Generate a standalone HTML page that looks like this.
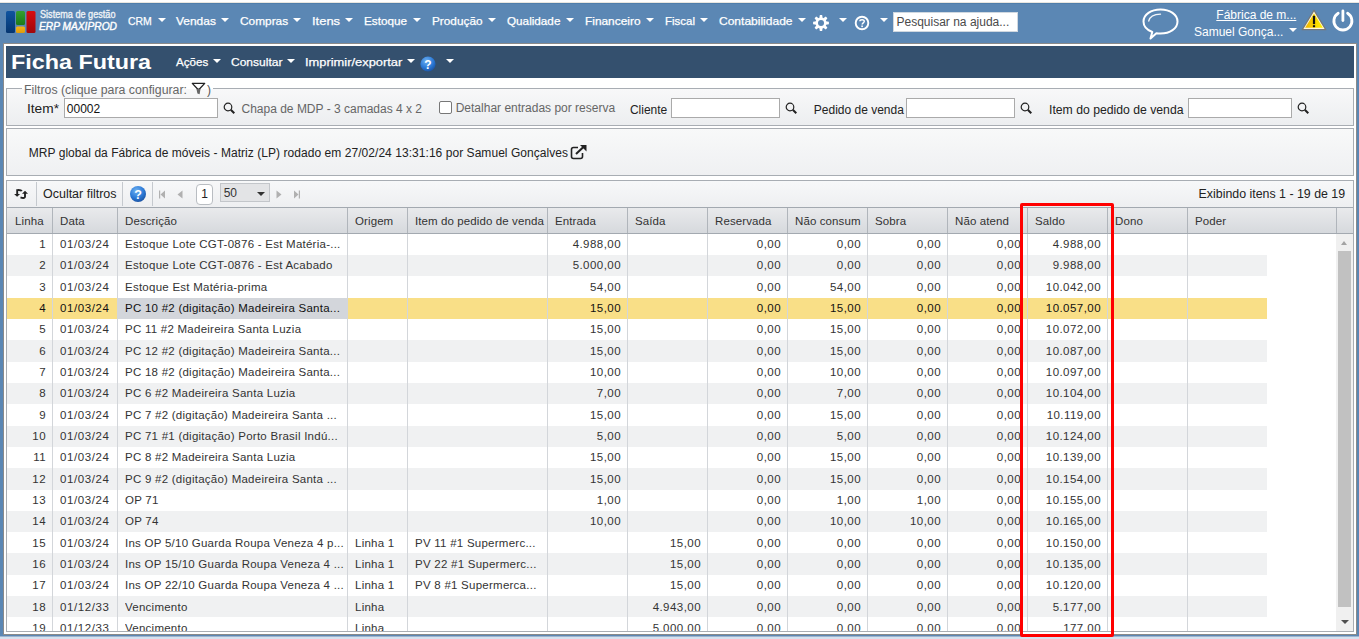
<!DOCTYPE html>
<html><head><meta charset="utf-8"><style>
html,body{margin:0;padding:0;}
body{width:1359px;height:639px;position:relative;overflow:hidden;background:#5b87b4;font-family:"Liberation Sans", sans-serif;}
div,span,svg{position:absolute;}
span{white-space:nowrap;display:block;}
svg text{font-family:"Liberation Sans",sans-serif;}
</style></head><body>
<div style="left:0px;top:0px;width:1359px;height:2px;background:#fff"></div>
<div style="left:0px;top:2px;width:1359px;height:1px;background:#e9e6e0"></div>
<div style="left:0px;top:3px;width:1359px;height:1px;background:#4f7eab"></div>
<div style="left:0px;top:636px;width:1359px;height:1px;background:#9fb6cf"></div>
<div style="left:0px;top:637px;width:1359px;height:2px;background:#d6e2f0"></div>
<svg style="left:5px;top:10px" width="32" height="24" viewBox="0 0 32 24"><defs><linearGradient id="gb" x1="0" y1="0" x2="0" y2="1"><stop offset="0" stop-color="#0f54a0"/><stop offset="1" stop-color="#063670"/></linearGradient><linearGradient id="gg" x1="0" y1="0" x2="0" y2="1"><stop offset="0" stop-color="#35a02f"/><stop offset="1" stop-color="#1c7a1a"/></linearGradient><linearGradient id="gr" x1="0" y1="0" x2="0" y2="1"><stop offset="0" stop-color="#d80d10"/><stop offset="1" stop-color="#a0080c"/></linearGradient><linearGradient id="gy" x1="0" y1="0" x2="0" y2="1"><stop offset="0" stop-color="#f6b417"/><stop offset="1" stop-color="#dd9a0c"/></linearGradient></defs><rect x="1" y="1" width="9" height="22" rx="1.5" fill="url(#gb)"/><rect x="11" y="1" width="9" height="14" rx="1.5" fill="url(#gg)"/><rect x="11" y="16.5" width="9" height="6.5" rx="1.5" fill="url(#gy)"/><rect x="21.5" y="1" width="9" height="22" rx="1.5" fill="url(#gr)"/></svg>
<span style="left:39.5px;top:9.77px;font-size:10.2px;line-height:10.2px;color:#eef2f6;-webkit-text-stroke:0.35px #eef2f6;transform-origin:0 0;transform:scaleX(0.8946)">Sistema de gestão</span>
<span style="left:39px;top:22.18px;font-size:10.3px;line-height:10.3px;color:#fff;font-style:italic;-webkit-text-stroke:0.4px #fff;transform-origin:0 0;transform:scaleX(0.9926)">ERP MAXIPROD</span>
<span style="left:127.69999999999999px;top:16.23px;font-size:11.3px;line-height:11.3px;color:#fff;-webkit-text-stroke:0.25px #fff;transform-origin:0 0;transform:scaleX(0.9248)">CRM</span>
<div style="left:157.8px;top:17.7px;width:0;height:0;border-left:4.25px solid transparent;border-right:4.25px solid transparent;border-top:4.5px solid #fff"></div>
<span style="left:176.0px;top:16.23px;font-size:11.3px;line-height:11.3px;color:#fff;-webkit-text-stroke:0.25px #fff;transform-origin:0 0;transform:scaleX(1.0583)">Vendas</span>
<div style="left:220.8px;top:17.7px;width:0;height:0;border-left:4.25px solid transparent;border-right:4.25px solid transparent;border-top:4.5px solid #fff"></div>
<span style="left:240.0px;top:16.23px;font-size:11.3px;line-height:11.3px;color:#fff;-webkit-text-stroke:0.25px #fff;transform-origin:0 0;transform:scaleX(1.0496)">Compras</span>
<div style="left:292.8px;top:17.7px;width:0;height:0;border-left:4.25px solid transparent;border-right:4.25px solid transparent;border-top:4.5px solid #fff"></div>
<span style="left:312.1px;top:16.23px;font-size:11.3px;line-height:11.3px;color:#fff;-webkit-text-stroke:0.25px #fff;transform-origin:0 0;transform:scaleX(1.1469)">Itens</span>
<div style="left:345.40000000000003px;top:17.7px;width:0;height:0;border-left:4.25px solid transparent;border-right:4.25px solid transparent;border-top:4.5px solid #fff"></div>
<span style="left:364.4px;top:16.23px;font-size:11.3px;line-height:11.3px;color:#fff;-webkit-text-stroke:0.25px #fff;transform-origin:0 0;transform:scaleX(1.0393)">Estoque</span>
<div style="left:412.8px;top:17.7px;width:0;height:0;border-left:4.25px solid transparent;border-right:4.25px solid transparent;border-top:4.5px solid #fff"></div>
<span style="left:432.0px;top:16.23px;font-size:11.3px;line-height:11.3px;color:#fff;-webkit-text-stroke:0.25px #fff;transform-origin:0 0;transform:scaleX(1.0443)">Produção</span>
<div style="left:488.1px;top:17.7px;width:0;height:0;border-left:4.25px solid transparent;border-right:4.25px solid transparent;border-top:4.5px solid #fff"></div>
<span style="left:507.1px;top:16.23px;font-size:11.3px;line-height:11.3px;color:#fff;-webkit-text-stroke:0.25px #fff;transform-origin:0 0;transform:scaleX(1.0366)">Qualidade</span>
<div style="left:565.8px;top:17.7px;width:0;height:0;border-left:4.25px solid transparent;border-right:4.25px solid transparent;border-top:4.5px solid #fff"></div>
<span style="left:585.0px;top:16.23px;font-size:11.3px;line-height:11.3px;color:#fff;-webkit-text-stroke:0.25px #fff;transform-origin:0 0;transform:scaleX(1.0521)">Financeiro</span>
<div style="left:645.8px;top:17.7px;width:0;height:0;border-left:4.25px solid transparent;border-right:4.25px solid transparent;border-top:4.5px solid #fff"></div>
<span style="left:664.5px;top:16.23px;font-size:11.3px;line-height:11.3px;color:#fff;-webkit-text-stroke:0.25px #fff;transform-origin:0 0;transform:scaleX(1.0169)">Fiscal</span>
<div style="left:699.8px;top:17.7px;width:0;height:0;border-left:4.25px solid transparent;border-right:4.25px solid transparent;border-top:4.5px solid #fff"></div>
<span style="left:719.4px;top:16.23px;font-size:11.3px;line-height:11.3px;color:#fff;-webkit-text-stroke:0.25px #fff;transform-origin:0 0;transform:scaleX(1.0638)">Contabilidade</span>
<div style="left:797.5999999999999px;top:17.7px;width:0;height:0;border-left:4.25px solid transparent;border-right:4.25px solid transparent;border-top:4.5px solid #fff"></div>
<svg style="left:812px;top:14px" width="18" height="18" viewBox="-9 -9 18 18"><g fill="#fff"><path d="M-1.7 -4.5 L1.7 -4.5 L1.15 -7.9 L-1.15 -7.9 Z" transform="rotate(0)"/><path d="M-1.7 -4.5 L1.7 -4.5 L1.15 -7.9 L-1.15 -7.9 Z" transform="rotate(45)"/><path d="M-1.7 -4.5 L1.7 -4.5 L1.15 -7.9 L-1.15 -7.9 Z" transform="rotate(90)"/><path d="M-1.7 -4.5 L1.7 -4.5 L1.15 -7.9 L-1.15 -7.9 Z" transform="rotate(135)"/><path d="M-1.7 -4.5 L1.7 -4.5 L1.15 -7.9 L-1.15 -7.9 Z" transform="rotate(180)"/><path d="M-1.7 -4.5 L1.7 -4.5 L1.15 -7.9 L-1.15 -7.9 Z" transform="rotate(225)"/><path d="M-1.7 -4.5 L1.7 -4.5 L1.15 -7.9 L-1.15 -7.9 Z" transform="rotate(270)"/><path d="M-1.7 -4.5 L1.7 -4.5 L1.15 -7.9 L-1.15 -7.9 Z" transform="rotate(315)"/><circle r="5.5"/></g><circle r="3.0" fill="#5b87b4"/></svg>
<div style="left:838.8px;top:17.7px;width:0;height:0;border-left:4.25px solid transparent;border-right:4.25px solid transparent;border-top:4.5px solid #fff"></div>
<svg style="left:854px;top:15px" width="16" height="16" viewBox="0 0 16 16"><circle cx="8" cy="8" r="6.3" fill="none" stroke="#fff" stroke-width="1.9"/><path d="M5.9 6.2 C5.9 4.3 10.3 4.2 10.3 6.3 C10.3 7.8 8.1 7.9 8.1 9.6" fill="none" stroke="#fff" stroke-width="1.45"/><rect x="7.3" y="10.5" width="1.6" height="1.6" fill="#fff"/></svg>
<div style="left:879.8px;top:17.7px;width:0;height:0;border-left:4.25px solid transparent;border-right:4.25px solid transparent;border-top:4.5px solid #fff"></div>
<div style="left:893px;top:12px;width:123px;height:18px;background:#fff;border:1px solid #d0d8e0"></div>
<span style="left:896.5px;top:15.54px;font-size:12px;line-height:12px;color:#4a4a4a;">Pesquisar na ajuda...</span>
<svg style="left:1140px;top:6px" width="42" height="36" viewBox="0 0 42 36"><path d="M20.5 3.5 C30 3.5 37.5 8.5 37.5 15.5 C37.5 22.5 30 27.5 20.5 27.5 C19 27.5 17.6 27.4 16.4 27.2 L10.5 32.5 L12.3 26 C7 24 3.5 20 3.5 15.5 C3.5 8.5 11 3.5 20.5 3.5 Z" fill="none" stroke="#fff" stroke-width="2" stroke-linejoin="round"/><path d="M8.7 15 C9.6 11 14 8.4 20.5 8.2" fill="none" stroke="#f4f6f9" stroke-width="1.3" stroke-linecap="round"/></svg>
<span style="left:1216.3px;top:8.74px;font-size:12px;line-height:12px;color:#fff;text-decoration:underline">Fábrica de m...</span>
<span style="left:1194px;top:25.74px;font-size:12px;line-height:12px;color:#fff;">Samuel Gonça...</span>
<div style="left:1289px;top:28.3px;width:0;height:0;border-left:4.0px solid transparent;border-right:4.0px solid transparent;border-top:4.8px solid #fff"></div>
<svg style="left:1301px;top:9px" width="26" height="22" viewBox="0 0 26 22"><defs><linearGradient id="wy" x1="0" y1="0" x2="1" y2="0"><stop offset="0" stop-color="#f2b300"/><stop offset="1" stop-color="#fff200"/></linearGradient></defs><path d="M13 1.2 L24.8 20.7 L1.2 20.7 Z" fill="#777" stroke="#777" stroke-width="1.2" stroke-linejoin="round"/><path d="M13 2.6 L23.6 20 L2.4 20 Z" fill="#fff8d8" /><path d="M13 4.6 L21.9 18.8 L4.1 18.8 Z" fill="url(#wy)"/><rect x="11.9" y="6.8" width="2.2" height="8.3" fill="#111"/><rect x="11.9" y="16.2" width="2.2" height="2" fill="#111"/></svg>
<svg style="left:1331px;top:8px" width="24" height="25" viewBox="0 0 24 25"><path d="M7.2 5.3 A9 9 0 1 0 16.6 5.3" fill="none" stroke="#fff" stroke-width="2.8" stroke-linecap="round"/><line x1="11.9" y1="3" x2="11.9" y2="12.5" stroke="#fff" stroke-width="2.8" stroke-linecap="round"/></svg>
<div style="left:3px;top:43px;width:1354px;height:592px;background:#fff;box-sizing:border-box;border:1px solid #8a8a8a"></div>
<div style="left:6px;top:46px;width:1348px;height:32px;background:#34506e"></div>
<span style="left:11px;top:51.02px;font-size:21px;line-height:21px;color:#fff;font-weight:bold;transform-origin:0 0;transform:scaleX(1.1110)">Ficha Futura</span>
<span style="left:175.7px;top:57.33px;font-size:11.3px;line-height:11.3px;color:#fff;-webkit-text-stroke:0.25px #fff;transform-origin:0 0;transform:scaleX(1.0285)">Ações</span>
<div style="left:212.8px;top:58.8px;width:0;height:0;border-left:4.25px solid transparent;border-right:4.25px solid transparent;border-top:4.5px solid #fff"></div>
<span style="left:230.6px;top:57.33px;font-size:11.3px;line-height:11.3px;color:#fff;-webkit-text-stroke:0.25px #fff;transform-origin:0 0;transform:scaleX(1.0629)">Consultar</span>
<div style="left:286.8px;top:58.8px;width:0;height:0;border-left:4.25px solid transparent;border-right:4.25px solid transparent;border-top:4.5px solid #fff"></div>
<span style="left:304.5px;top:57.33px;font-size:11.3px;line-height:11.3px;color:#fff;-webkit-text-stroke:0.25px #fff;transform-origin:0 0;transform:scaleX(1.1397)">Imprimir/exportar</span>
<div style="left:406.8px;top:58.8px;width:0;height:0;border-left:4.25px solid transparent;border-right:4.25px solid transparent;border-top:4.5px solid #fff"></div>
<svg style="left:420px;top:56px" width="16" height="16" viewBox="0 0 16 16"><defs><radialGradient id="hb" cx="0.4" cy="0.3" r="0.75"><stop offset="0" stop-color="#6fb2f2"/><stop offset="0.6" stop-color="#2b79d6"/><stop offset="1" stop-color="#1a4f9e"/></radialGradient></defs><circle cx="8" cy="8" r="7.6" fill="url(#hb)"/><text x="8" y="12.6" text-anchor="middle" font-family="Liberation Sans" font-weight="bold" font-size="12" fill="#fff">?</text></svg>
<div style="left:445.8px;top:58.8px;width:0;height:0;border-left:4.25px solid transparent;border-right:4.25px solid transparent;border-top:4.5px solid #fff"></div>
<div style="left:6px;top:88px;width:1348px;height:38px;box-sizing:border-box;border:1px solid #a8adb3;background:linear-gradient(#f8f8f9,#eceef0)"></div>
<div style="left:22px;top:88px;width:191px;height:1px;background:#fff"></div>
<span style="left:24px;top:83.74px;font-size:12px;line-height:12px;color:#666;;transform-origin:0 0;transform:scaleX(1.0269)">Filtros (clique para configurar: </span>
<svg style="left:191px;top:82px" width="15" height="14" viewBox="0 0 15 14"><path d="M1.3 1.4 L13.7 1.4 L8.2 7.2 L6.8 7.2 Z" fill="none" stroke="#222" stroke-width="1.3" stroke-linejoin="round"/><path d="M5.5 7 L9.5 7 L8.6 12.2 L6.4 11.4 Z" fill="#666"/></svg>
<span style="left:207px;top:83.74px;font-size:12px;line-height:12px;color:#555;">)</span>
<span style="left:27px;top:102.84px;font-size:12px;line-height:12px;color:#222;;transform-origin:0 0;transform:scaleX(1.1422)">Item*</span>
<div style="left:64px;top:98px;width:154px;height:20px;box-sizing:border-box;background:#fff;border:1px solid #aaa"></div>
<span style="left:66.8px;top:102.64px;font-size:12px;line-height:12px;color:#111;">00002</span>
<svg style="left:223px;top:102px" width="13" height="13" viewBox="0 0 13 13"><circle cx="5" cy="5" r="3.8" fill="none" stroke="#222" stroke-width="1.2"/><line x1="7.8" y1="7.8" x2="11.3" y2="11.3" stroke="#222" stroke-width="2"/></svg>
<span style="left:241.5px;top:103.04px;font-size:12px;line-height:12px;color:#666;">Chapa de MDP - 3 camadas 4 x 2</span>
<div style="left:439px;top:101px;width:13px;height:13px;box-sizing:border-box;background:#fff;border:1px solid #777;border-radius:2px"></div>
<span style="left:455.7px;top:102.14px;font-size:12px;line-height:12px;color:#666;">Detalhar entradas por reserva</span>
<span style="left:629.9px;top:103.64px;font-size:12px;line-height:12px;color:#222;">Cliente</span>
<div style="left:671px;top:98px;width:109px;height:20px;box-sizing:border-box;background:#fff;border:1px solid #aaa"></div>
<svg style="left:785px;top:102px" width="13" height="13" viewBox="0 0 13 13"><circle cx="5" cy="5" r="3.8" fill="none" stroke="#222" stroke-width="1.2"/><line x1="7.8" y1="7.8" x2="11.3" y2="11.3" stroke="#222" stroke-width="2"/></svg>
<span style="left:813.8px;top:103.64px;font-size:12px;line-height:12px;color:#222;">Pedido de venda</span>
<div style="left:906px;top:98px;width:109px;height:20px;box-sizing:border-box;background:#fff;border:1px solid #aaa"></div>
<svg style="left:1020px;top:102px" width="13" height="13" viewBox="0 0 13 13"><circle cx="5" cy="5" r="3.8" fill="none" stroke="#222" stroke-width="1.2"/><line x1="7.8" y1="7.8" x2="11.3" y2="11.3" stroke="#222" stroke-width="2"/></svg>
<span style="left:1048.5px;top:103.64px;font-size:12px;line-height:12px;color:#222;;transform-origin:0 0;transform:scaleX(1.0181)">Item do pedido de venda</span>
<div style="left:1188px;top:98px;width:104px;height:20px;box-sizing:border-box;background:#fff;border:1px solid #aaa"></div>
<svg style="left:1297px;top:102px" width="13" height="13" viewBox="0 0 13 13"><circle cx="5" cy="5" r="3.8" fill="none" stroke="#222" stroke-width="1.2"/><line x1="7.8" y1="7.8" x2="11.3" y2="11.3" stroke="#222" stroke-width="2"/></svg>
<div style="left:6px;top:128px;width:1348px;height:48px;box-sizing:border-box;border:1px solid #a8adb3;background:linear-gradient(#f8f9f9,#eff0f2)"></div>
<span style="left:28.7px;top:146.94px;font-size:12px;line-height:12px;color:#222;letter-spacing:0.05px">MRP global da Fábrica de móveis - Matriz (LP) rodado em 27/02/24 13:31:16 por Samuel Gonçalves</span>
<svg style="left:570px;top:144px" width="18" height="16" viewBox="0 0 18 16"><path d="M8 3.5 L3.5 3.5 Q1.5 3.5 1.5 5.5 L1.5 12.5 Q1.5 14.5 3.5 14.5 L10.5 14.5 Q12.5 14.5 12.5 12.5 L12.5 9" fill="none" stroke="#222" stroke-width="1.6"/><path d="M6 10 L14.5 2" stroke="#222" stroke-width="2"/><path d="M10 1 L16.5 1 L16.5 7.5 Z" fill="#222"/></svg>
<div style="left:6px;top:180px;width:1348px;height:452px;box-sizing:border-box;border:1px solid #a8adb3;background:#fff"></div>
<div style="left:7px;top:181px;width:1346px;height:26px;background:linear-gradient(#f7f8f9,#eeeff1)"></div>
<div style="left:36px;top:182px;width:1px;height:24px;background:#c5c9ce"></div>
<div style="left:122px;top:182px;width:1px;height:24px;background:#c5c9ce"></div>
<div style="left:152px;top:182px;width:1px;height:24px;background:#c5c9ce"></div>
<svg style="left:13px;top:187px" width="16" height="14" viewBox="0 0 16 14"><path d="M8.8 4.2 C8.2 3 6.5 2.9 4.2 3.1 L4.2 7.5" fill="none" stroke="#222" stroke-width="1.9"/><path d="M1.1 7 L7.1 7 L4.1 9.8 Z" fill="#222"/><path d="M12 5.5 L12 10 C11.5 11.3 9.5 11.2 7.5 10.4" fill="none" stroke="#222" stroke-width="1.9"/><path d="M9 6.8 L15 6.8 L12 3.8 Z" fill="#222"/></svg>
<span style="left:43.2px;top:188.04px;font-size:12px;line-height:12px;color:#222;;transform-origin:0 0;transform:scaleX(1.0398)">Ocultar filtros</span>
<svg style="left:129px;top:185px" width="18" height="18" viewBox="0 0 18 18"><defs><radialGradient id="hb2" cx="0.4" cy="0.3" r="0.75"><stop offset="0" stop-color="#6fb2f2"/><stop offset="0.6" stop-color="#2b79d6"/><stop offset="1" stop-color="#1a4f9e"/></radialGradient></defs><circle cx="9" cy="9" r="8" fill="url(#hb2)"/><text x="9" y="13.6" text-anchor="middle" font-family="Liberation Sans" font-weight="bold" font-size="12.5" fill="#fff">?</text></svg>
<svg style="left:158px;top:189px" width="150" height="11" viewBox="0 0 150 11"><rect x="1" y="1.5" width="1.2" height="8" fill="#b0b0b0"/><path d="M7 1.5 L2.5 5.5 L7 9.5 Z" fill="#b0b0b0"/><path d="M24.5 1.5 L19.5 5.5 L24.5 9.5 Z" fill="#b0b0b0"/><path d="M118.5 1.5 L123.5 5.5 L118.5 9.5 Z" fill="#b0b0b0"/><path d="M136 1.5 L140.5 5.5 L136 9.5 Z" fill="#b0b0b0"/><rect x="140.8" y="1.5" width="1.2" height="8" fill="#b0b0b0"/></svg>
<div style="left:196px;top:184px;width:17px;height:21px;box-sizing:border-box;background:#fff;border:1px solid #b9bdc2;border-radius:4px"></div>
<span style="left:201.2px;top:188.34px;font-size:12px;line-height:12px;color:#222;">1</span>
<div style="left:220px;top:183px;width:50px;height:19px;box-sizing:border-box;background:#e3e4e6;border:1px solid #c3c6ca"></div>
<span style="left:223.7px;top:186.64px;font-size:12px;line-height:12px;color:#333;">50</span>
<div style="left:257px;top:192px;width:0;height:0;border-left:4.5px solid transparent;border-right:4.5px solid transparent;border-top:4.5px solid #333"></div>
<span style="right:13.799999999999955px;top:187.64px;font-size:12px;line-height:12px;color:#222;;transform-origin:100% 0;transform:scaleX(1.0309)">Exibindo itens 1 - 19 de 19</span>
<div style="left:7px;top:207px;width:1346px;height:1px;background:#a3a9b0"></div>
<div style="left:7px;top:208px;width:1346px;height:25px;background:linear-gradient(#e9eaec,#d6d9dd)"></div>
<div style="left:7px;top:233px;width:1346px;height:1px;background:#a3a9b0"></div>
<span style="left:15px;top:215.21px;width:37px;overflow:hidden;font-size:11.5px;line-height:12px;letter-spacing:0.1px;color:#333">Linha</span>
<div style="left:52px;top:208px;width:1px;height:25px;background:#b0b5bb"></div>
<span style="left:60px;top:215.21px;width:57px;overflow:hidden;font-size:11.5px;line-height:12px;letter-spacing:0.1px;color:#333">Data</span>
<div style="left:117px;top:208px;width:1px;height:25px;background:#b0b5bb"></div>
<span style="left:125px;top:215.21px;width:222px;overflow:hidden;font-size:11.5px;line-height:12px;letter-spacing:0.1px;color:#333">Descrição</span>
<div style="left:347px;top:208px;width:1px;height:25px;background:#b0b5bb"></div>
<span style="left:355px;top:215.21px;width:52px;overflow:hidden;font-size:11.5px;line-height:12px;letter-spacing:0.1px;color:#333">Origem</span>
<div style="left:407px;top:208px;width:1px;height:25px;background:#b0b5bb"></div>
<span style="left:415px;top:215.21px;width:132px;overflow:hidden;font-size:11.5px;line-height:12px;letter-spacing:0.1px;color:#333">Item do pedido de venda</span>
<div style="left:547px;top:208px;width:1px;height:25px;background:#b0b5bb"></div>
<span style="left:555px;top:215.21px;width:72px;overflow:hidden;font-size:11.5px;line-height:12px;letter-spacing:0.1px;color:#333">Entrada</span>
<div style="left:627px;top:208px;width:1px;height:25px;background:#b0b5bb"></div>
<span style="left:635px;top:215.21px;width:72px;overflow:hidden;font-size:11.5px;line-height:12px;letter-spacing:0.1px;color:#333">Saída</span>
<div style="left:707px;top:208px;width:1px;height:25px;background:#b0b5bb"></div>
<span style="left:715px;top:215.21px;width:72px;overflow:hidden;font-size:11.5px;line-height:12px;letter-spacing:0.1px;color:#333">Reservada</span>
<div style="left:787px;top:208px;width:1px;height:25px;background:#b0b5bb"></div>
<span style="left:795px;top:215.21px;width:72px;overflow:hidden;font-size:11.5px;line-height:12px;letter-spacing:0.1px;color:#333">Não consum</span>
<div style="left:867px;top:208px;width:1px;height:25px;background:#b0b5bb"></div>
<span style="left:875px;top:215.21px;width:72px;overflow:hidden;font-size:11.5px;line-height:12px;letter-spacing:0.1px;color:#333">Sobra</span>
<div style="left:947px;top:208px;width:1px;height:25px;background:#b0b5bb"></div>
<span style="left:955px;top:215.21px;width:72px;overflow:hidden;font-size:11.5px;line-height:12px;letter-spacing:0.1px;color:#333">Não atend</span>
<div style="left:1027px;top:208px;width:1px;height:25px;background:#b0b5bb"></div>
<span style="left:1035px;top:215.21px;width:72px;overflow:hidden;font-size:11.5px;line-height:12px;letter-spacing:0.1px;color:#333">Saldo</span>
<div style="left:1107px;top:208px;width:1px;height:25px;background:#b0b5bb"></div>
<span style="left:1115px;top:215.21px;width:72px;overflow:hidden;font-size:11.5px;line-height:12px;letter-spacing:0.1px;color:#333">Dono</span>
<div style="left:1187px;top:208px;width:1px;height:25px;background:#b0b5bb"></div>
<span style="left:1195px;top:215.21px;width:72px;overflow:hidden;font-size:11.5px;line-height:12px;letter-spacing:0.1px;color:#333">Poder</span>
<div style="left:1336px;top:208px;width:1px;height:25px;background:#b0b5bb"></div>
<div style="left:7px;top:234px;width:1329px;height:397px;overflow:hidden">
<span style="left:1px;width:38px;text-align:right;top:3.97px;font-size:11.5px;line-height:12px;letter-spacing:0.45px;color:#333">1</span>
<span style="left:53px;width:56px;overflow:hidden;top:3.97px;font-size:11.5px;line-height:12px;color:#333;letter-spacing:0.6px">01/03/24</span>
<span style="left:118px;width:221px;overflow:hidden;top:3.97px;font-size:11.5px;line-height:12px;color:#333;letter-spacing:0.25px">Estoque Lote CGT-0876 - Est Matéria-...</span>
<span style="left:541px;width:73px;text-align:right;top:3.97px;font-size:11.5px;line-height:12px;letter-spacing:0.45px;color:#333">4.988,00</span>
<span style="left:701px;width:73px;text-align:right;top:3.97px;font-size:11.5px;line-height:12px;letter-spacing:0.45px;color:#333">0,00</span>
<span style="left:781px;width:73px;text-align:right;top:3.97px;font-size:11.5px;line-height:12px;letter-spacing:0.45px;color:#333">0,00</span>
<span style="left:861px;width:73px;text-align:right;top:3.97px;font-size:11.5px;line-height:12px;letter-spacing:0.45px;color:#333">0,00</span>
<span style="left:941px;width:73px;text-align:right;top:3.97px;font-size:11.5px;line-height:12px;letter-spacing:0.45px;color:#333">0,00</span>
<span style="left:1021px;width:73px;text-align:right;top:3.97px;font-size:11.5px;line-height:12px;letter-spacing:0.45px;color:#333">4.988,00</span>
<div style="left:0;top:21px;width:1260px;height:21px;background:#f0f1f2"></div>
<span style="left:1px;width:38px;text-align:right;top:25.30px;font-size:11.5px;line-height:12px;letter-spacing:0.45px;color:#333">2</span>
<span style="left:53px;width:56px;overflow:hidden;top:25.30px;font-size:11.5px;line-height:12px;color:#333;letter-spacing:0.6px">01/03/24</span>
<span style="left:118px;width:221px;overflow:hidden;top:25.30px;font-size:11.5px;line-height:12px;color:#333;letter-spacing:0.25px">Estoque Lote CGT-0876 - Est Acabado</span>
<span style="left:541px;width:73px;text-align:right;top:25.30px;font-size:11.5px;line-height:12px;letter-spacing:0.45px;color:#333">5.000,00</span>
<span style="left:701px;width:73px;text-align:right;top:25.30px;font-size:11.5px;line-height:12px;letter-spacing:0.45px;color:#333">0,00</span>
<span style="left:781px;width:73px;text-align:right;top:25.30px;font-size:11.5px;line-height:12px;letter-spacing:0.45px;color:#333">0,00</span>
<span style="left:861px;width:73px;text-align:right;top:25.30px;font-size:11.5px;line-height:12px;letter-spacing:0.45px;color:#333">0,00</span>
<span style="left:941px;width:73px;text-align:right;top:25.30px;font-size:11.5px;line-height:12px;letter-spacing:0.45px;color:#333">0,00</span>
<span style="left:1021px;width:73px;text-align:right;top:25.30px;font-size:11.5px;line-height:12px;letter-spacing:0.45px;color:#333">9.988,00</span>
<span style="left:1px;width:38px;text-align:right;top:46.63px;font-size:11.5px;line-height:12px;letter-spacing:0.45px;color:#333">3</span>
<span style="left:53px;width:56px;overflow:hidden;top:46.63px;font-size:11.5px;line-height:12px;color:#333;letter-spacing:0.6px">01/03/24</span>
<span style="left:118px;width:221px;overflow:hidden;top:46.63px;font-size:11.5px;line-height:12px;color:#333;letter-spacing:0.25px">Estoque Est Matéria-prima</span>
<span style="left:541px;width:73px;text-align:right;top:46.63px;font-size:11.5px;line-height:12px;letter-spacing:0.45px;color:#333">54,00</span>
<span style="left:701px;width:73px;text-align:right;top:46.63px;font-size:11.5px;line-height:12px;letter-spacing:0.45px;color:#333">0,00</span>
<span style="left:781px;width:73px;text-align:right;top:46.63px;font-size:11.5px;line-height:12px;letter-spacing:0.45px;color:#333">54,00</span>
<span style="left:861px;width:73px;text-align:right;top:46.63px;font-size:11.5px;line-height:12px;letter-spacing:0.45px;color:#333">0,00</span>
<span style="left:941px;width:73px;text-align:right;top:46.63px;font-size:11.5px;line-height:12px;letter-spacing:0.45px;color:#333">0,00</span>
<span style="left:1021px;width:73px;text-align:right;top:46.63px;font-size:11.5px;line-height:12px;letter-spacing:0.45px;color:#333">10.042,00</span>
<div style="left:0;top:64px;width:1260px;height:21px;background:#f9df87"></div>
<div style="left:111px;top:64px;width:229px;height:21px;background:#d3d6db"></div>
<span style="left:1px;width:38px;text-align:right;top:67.97px;font-size:11.5px;line-height:12px;letter-spacing:0.45px;color:#111">4</span>
<span style="left:53px;width:56px;overflow:hidden;top:67.97px;font-size:11.5px;line-height:12px;color:#111;letter-spacing:0.6px">01/03/24</span>
<span style="left:118px;width:221px;overflow:hidden;top:67.97px;font-size:11.5px;line-height:12px;color:#111;letter-spacing:0.25px">PC 10 #2 (digitação) Madeireira Santa...</span>
<span style="left:541px;width:73px;text-align:right;top:67.97px;font-size:11.5px;line-height:12px;letter-spacing:0.45px;color:#111">15,00</span>
<span style="left:701px;width:73px;text-align:right;top:67.97px;font-size:11.5px;line-height:12px;letter-spacing:0.45px;color:#111">0,00</span>
<span style="left:781px;width:73px;text-align:right;top:67.97px;font-size:11.5px;line-height:12px;letter-spacing:0.45px;color:#111">15,00</span>
<span style="left:861px;width:73px;text-align:right;top:67.97px;font-size:11.5px;line-height:12px;letter-spacing:0.45px;color:#111">0,00</span>
<span style="left:941px;width:73px;text-align:right;top:67.97px;font-size:11.5px;line-height:12px;letter-spacing:0.45px;color:#111">0,00</span>
<span style="left:1021px;width:73px;text-align:right;top:67.97px;font-size:11.5px;line-height:12px;letter-spacing:0.45px;color:#111">10.057,00</span>
<span style="left:1px;width:38px;text-align:right;top:89.30px;font-size:11.5px;line-height:12px;letter-spacing:0.45px;color:#333">5</span>
<span style="left:53px;width:56px;overflow:hidden;top:89.30px;font-size:11.5px;line-height:12px;color:#333;letter-spacing:0.6px">01/03/24</span>
<span style="left:118px;width:221px;overflow:hidden;top:89.30px;font-size:11.5px;line-height:12px;color:#333;letter-spacing:0.25px">PC 11 #2 Madeireira Santa Luzia</span>
<span style="left:541px;width:73px;text-align:right;top:89.30px;font-size:11.5px;line-height:12px;letter-spacing:0.45px;color:#333">15,00</span>
<span style="left:701px;width:73px;text-align:right;top:89.30px;font-size:11.5px;line-height:12px;letter-spacing:0.45px;color:#333">0,00</span>
<span style="left:781px;width:73px;text-align:right;top:89.30px;font-size:11.5px;line-height:12px;letter-spacing:0.45px;color:#333">15,00</span>
<span style="left:861px;width:73px;text-align:right;top:89.30px;font-size:11.5px;line-height:12px;letter-spacing:0.45px;color:#333">0,00</span>
<span style="left:941px;width:73px;text-align:right;top:89.30px;font-size:11.5px;line-height:12px;letter-spacing:0.45px;color:#333">0,00</span>
<span style="left:1021px;width:73px;text-align:right;top:89.30px;font-size:11.5px;line-height:12px;letter-spacing:0.45px;color:#333">10.072,00</span>
<div style="left:0;top:106px;width:1260px;height:22px;background:#f0f1f2"></div>
<span style="left:1px;width:38px;text-align:right;top:110.63px;font-size:11.5px;line-height:12px;letter-spacing:0.45px;color:#333">6</span>
<span style="left:53px;width:56px;overflow:hidden;top:110.63px;font-size:11.5px;line-height:12px;color:#333;letter-spacing:0.6px">01/03/24</span>
<span style="left:118px;width:221px;overflow:hidden;top:110.63px;font-size:11.5px;line-height:12px;color:#333;letter-spacing:0.25px">PC 12 #2 (digitação) Madeireira Santa...</span>
<span style="left:541px;width:73px;text-align:right;top:110.63px;font-size:11.5px;line-height:12px;letter-spacing:0.45px;color:#333">15,00</span>
<span style="left:701px;width:73px;text-align:right;top:110.63px;font-size:11.5px;line-height:12px;letter-spacing:0.45px;color:#333">0,00</span>
<span style="left:781px;width:73px;text-align:right;top:110.63px;font-size:11.5px;line-height:12px;letter-spacing:0.45px;color:#333">15,00</span>
<span style="left:861px;width:73px;text-align:right;top:110.63px;font-size:11.5px;line-height:12px;letter-spacing:0.45px;color:#333">0,00</span>
<span style="left:941px;width:73px;text-align:right;top:110.63px;font-size:11.5px;line-height:12px;letter-spacing:0.45px;color:#333">0,00</span>
<span style="left:1021px;width:73px;text-align:right;top:110.63px;font-size:11.5px;line-height:12px;letter-spacing:0.45px;color:#333">10.087,00</span>
<span style="left:1px;width:38px;text-align:right;top:131.97px;font-size:11.5px;line-height:12px;letter-spacing:0.45px;color:#333">7</span>
<span style="left:53px;width:56px;overflow:hidden;top:131.97px;font-size:11.5px;line-height:12px;color:#333;letter-spacing:0.6px">01/03/24</span>
<span style="left:118px;width:221px;overflow:hidden;top:131.97px;font-size:11.5px;line-height:12px;color:#333;letter-spacing:0.25px">PC 18 #2 (digitação) Madeireira Santa...</span>
<span style="left:541px;width:73px;text-align:right;top:131.97px;font-size:11.5px;line-height:12px;letter-spacing:0.45px;color:#333">10,00</span>
<span style="left:701px;width:73px;text-align:right;top:131.97px;font-size:11.5px;line-height:12px;letter-spacing:0.45px;color:#333">0,00</span>
<span style="left:781px;width:73px;text-align:right;top:131.97px;font-size:11.5px;line-height:12px;letter-spacing:0.45px;color:#333">10,00</span>
<span style="left:861px;width:73px;text-align:right;top:131.97px;font-size:11.5px;line-height:12px;letter-spacing:0.45px;color:#333">0,00</span>
<span style="left:941px;width:73px;text-align:right;top:131.97px;font-size:11.5px;line-height:12px;letter-spacing:0.45px;color:#333">0,00</span>
<span style="left:1021px;width:73px;text-align:right;top:131.97px;font-size:11.5px;line-height:12px;letter-spacing:0.45px;color:#333">10.097,00</span>
<div style="left:0;top:149px;width:1260px;height:21px;background:#f0f1f2"></div>
<span style="left:1px;width:38px;text-align:right;top:153.30px;font-size:11.5px;line-height:12px;letter-spacing:0.45px;color:#333">8</span>
<span style="left:53px;width:56px;overflow:hidden;top:153.30px;font-size:11.5px;line-height:12px;color:#333;letter-spacing:0.6px">01/03/24</span>
<span style="left:118px;width:221px;overflow:hidden;top:153.30px;font-size:11.5px;line-height:12px;color:#333;letter-spacing:0.25px">PC 6 #2 Madeireira Santa Luzia</span>
<span style="left:541px;width:73px;text-align:right;top:153.30px;font-size:11.5px;line-height:12px;letter-spacing:0.45px;color:#333">7,00</span>
<span style="left:701px;width:73px;text-align:right;top:153.30px;font-size:11.5px;line-height:12px;letter-spacing:0.45px;color:#333">0,00</span>
<span style="left:781px;width:73px;text-align:right;top:153.30px;font-size:11.5px;line-height:12px;letter-spacing:0.45px;color:#333">7,00</span>
<span style="left:861px;width:73px;text-align:right;top:153.30px;font-size:11.5px;line-height:12px;letter-spacing:0.45px;color:#333">0,00</span>
<span style="left:941px;width:73px;text-align:right;top:153.30px;font-size:11.5px;line-height:12px;letter-spacing:0.45px;color:#333">0,00</span>
<span style="left:1021px;width:73px;text-align:right;top:153.30px;font-size:11.5px;line-height:12px;letter-spacing:0.45px;color:#333">10.104,00</span>
<span style="left:1px;width:38px;text-align:right;top:174.63px;font-size:11.5px;line-height:12px;letter-spacing:0.45px;color:#333">9</span>
<span style="left:53px;width:56px;overflow:hidden;top:174.63px;font-size:11.5px;line-height:12px;color:#333;letter-spacing:0.6px">01/03/24</span>
<span style="left:118px;width:221px;overflow:hidden;top:174.63px;font-size:11.5px;line-height:12px;color:#333;letter-spacing:0.25px">PC 7 #2 (digitação) Madeireira Santa ...</span>
<span style="left:541px;width:73px;text-align:right;top:174.63px;font-size:11.5px;line-height:12px;letter-spacing:0.45px;color:#333">15,00</span>
<span style="left:701px;width:73px;text-align:right;top:174.63px;font-size:11.5px;line-height:12px;letter-spacing:0.45px;color:#333">0,00</span>
<span style="left:781px;width:73px;text-align:right;top:174.63px;font-size:11.5px;line-height:12px;letter-spacing:0.45px;color:#333">15,00</span>
<span style="left:861px;width:73px;text-align:right;top:174.63px;font-size:11.5px;line-height:12px;letter-spacing:0.45px;color:#333">0,00</span>
<span style="left:941px;width:73px;text-align:right;top:174.63px;font-size:11.5px;line-height:12px;letter-spacing:0.45px;color:#333">0,00</span>
<span style="left:1021px;width:73px;text-align:right;top:174.63px;font-size:11.5px;line-height:12px;letter-spacing:0.45px;color:#333">10.119,00</span>
<div style="left:0;top:192px;width:1260px;height:21px;background:#f0f1f2"></div>
<span style="left:1px;width:38px;text-align:right;top:195.96px;font-size:11.5px;line-height:12px;letter-spacing:0.45px;color:#333">10</span>
<span style="left:53px;width:56px;overflow:hidden;top:195.96px;font-size:11.5px;line-height:12px;color:#333;letter-spacing:0.6px">01/03/24</span>
<span style="left:118px;width:221px;overflow:hidden;top:195.96px;font-size:11.5px;line-height:12px;color:#333;letter-spacing:0.25px">PC 71 #1 (digitação) Porto Brasil Indú...</span>
<span style="left:541px;width:73px;text-align:right;top:195.96px;font-size:11.5px;line-height:12px;letter-spacing:0.45px;color:#333">5,00</span>
<span style="left:701px;width:73px;text-align:right;top:195.96px;font-size:11.5px;line-height:12px;letter-spacing:0.45px;color:#333">0,00</span>
<span style="left:781px;width:73px;text-align:right;top:195.96px;font-size:11.5px;line-height:12px;letter-spacing:0.45px;color:#333">5,00</span>
<span style="left:861px;width:73px;text-align:right;top:195.96px;font-size:11.5px;line-height:12px;letter-spacing:0.45px;color:#333">0,00</span>
<span style="left:941px;width:73px;text-align:right;top:195.96px;font-size:11.5px;line-height:12px;letter-spacing:0.45px;color:#333">0,00</span>
<span style="left:1021px;width:73px;text-align:right;top:195.96px;font-size:11.5px;line-height:12px;letter-spacing:0.45px;color:#333">10.124,00</span>
<span style="left:1px;width:38px;text-align:right;top:217.30px;font-size:11.5px;line-height:12px;letter-spacing:0.45px;color:#333">11</span>
<span style="left:53px;width:56px;overflow:hidden;top:217.30px;font-size:11.5px;line-height:12px;color:#333;letter-spacing:0.6px">01/03/24</span>
<span style="left:118px;width:221px;overflow:hidden;top:217.30px;font-size:11.5px;line-height:12px;color:#333;letter-spacing:0.25px">PC 8 #2 Madeireira Santa Luzia</span>
<span style="left:541px;width:73px;text-align:right;top:217.30px;font-size:11.5px;line-height:12px;letter-spacing:0.45px;color:#333">15,00</span>
<span style="left:701px;width:73px;text-align:right;top:217.30px;font-size:11.5px;line-height:12px;letter-spacing:0.45px;color:#333">0,00</span>
<span style="left:781px;width:73px;text-align:right;top:217.30px;font-size:11.5px;line-height:12px;letter-spacing:0.45px;color:#333">15,00</span>
<span style="left:861px;width:73px;text-align:right;top:217.30px;font-size:11.5px;line-height:12px;letter-spacing:0.45px;color:#333">0,00</span>
<span style="left:941px;width:73px;text-align:right;top:217.30px;font-size:11.5px;line-height:12px;letter-spacing:0.45px;color:#333">0,00</span>
<span style="left:1021px;width:73px;text-align:right;top:217.30px;font-size:11.5px;line-height:12px;letter-spacing:0.45px;color:#333">10.139,00</span>
<div style="left:0;top:234px;width:1260px;height:22px;background:#f0f1f2"></div>
<span style="left:1px;width:38px;text-align:right;top:238.63px;font-size:11.5px;line-height:12px;letter-spacing:0.45px;color:#333">12</span>
<span style="left:53px;width:56px;overflow:hidden;top:238.63px;font-size:11.5px;line-height:12px;color:#333;letter-spacing:0.6px">01/03/24</span>
<span style="left:118px;width:221px;overflow:hidden;top:238.63px;font-size:11.5px;line-height:12px;color:#333;letter-spacing:0.25px">PC 9 #2 (digitação) Madeireira Santa ...</span>
<span style="left:541px;width:73px;text-align:right;top:238.63px;font-size:11.5px;line-height:12px;letter-spacing:0.45px;color:#333">15,00</span>
<span style="left:701px;width:73px;text-align:right;top:238.63px;font-size:11.5px;line-height:12px;letter-spacing:0.45px;color:#333">0,00</span>
<span style="left:781px;width:73px;text-align:right;top:238.63px;font-size:11.5px;line-height:12px;letter-spacing:0.45px;color:#333">15,00</span>
<span style="left:861px;width:73px;text-align:right;top:238.63px;font-size:11.5px;line-height:12px;letter-spacing:0.45px;color:#333">0,00</span>
<span style="left:941px;width:73px;text-align:right;top:238.63px;font-size:11.5px;line-height:12px;letter-spacing:0.45px;color:#333">0,00</span>
<span style="left:1021px;width:73px;text-align:right;top:238.63px;font-size:11.5px;line-height:12px;letter-spacing:0.45px;color:#333">10.154,00</span>
<span style="left:1px;width:38px;text-align:right;top:259.96px;font-size:11.5px;line-height:12px;letter-spacing:0.45px;color:#333">13</span>
<span style="left:53px;width:56px;overflow:hidden;top:259.96px;font-size:11.5px;line-height:12px;color:#333;letter-spacing:0.6px">01/03/24</span>
<span style="left:118px;width:221px;overflow:hidden;top:259.96px;font-size:11.5px;line-height:12px;color:#333;letter-spacing:0.25px">OP 71</span>
<span style="left:541px;width:73px;text-align:right;top:259.96px;font-size:11.5px;line-height:12px;letter-spacing:0.45px;color:#333">1,00</span>
<span style="left:701px;width:73px;text-align:right;top:259.96px;font-size:11.5px;line-height:12px;letter-spacing:0.45px;color:#333">0,00</span>
<span style="left:781px;width:73px;text-align:right;top:259.96px;font-size:11.5px;line-height:12px;letter-spacing:0.45px;color:#333">1,00</span>
<span style="left:861px;width:73px;text-align:right;top:259.96px;font-size:11.5px;line-height:12px;letter-spacing:0.45px;color:#333">1,00</span>
<span style="left:941px;width:73px;text-align:right;top:259.96px;font-size:11.5px;line-height:12px;letter-spacing:0.45px;color:#333">0,00</span>
<span style="left:1021px;width:73px;text-align:right;top:259.96px;font-size:11.5px;line-height:12px;letter-spacing:0.45px;color:#333">10.155,00</span>
<div style="left:0;top:277px;width:1260px;height:21px;background:#f0f1f2"></div>
<span style="left:1px;width:38px;text-align:right;top:281.30px;font-size:11.5px;line-height:12px;letter-spacing:0.45px;color:#333">14</span>
<span style="left:53px;width:56px;overflow:hidden;top:281.30px;font-size:11.5px;line-height:12px;color:#333;letter-spacing:0.6px">01/03/24</span>
<span style="left:118px;width:221px;overflow:hidden;top:281.30px;font-size:11.5px;line-height:12px;color:#333;letter-spacing:0.25px">OP 74</span>
<span style="left:541px;width:73px;text-align:right;top:281.30px;font-size:11.5px;line-height:12px;letter-spacing:0.45px;color:#333">10,00</span>
<span style="left:701px;width:73px;text-align:right;top:281.30px;font-size:11.5px;line-height:12px;letter-spacing:0.45px;color:#333">0,00</span>
<span style="left:781px;width:73px;text-align:right;top:281.30px;font-size:11.5px;line-height:12px;letter-spacing:0.45px;color:#333">10,00</span>
<span style="left:861px;width:73px;text-align:right;top:281.30px;font-size:11.5px;line-height:12px;letter-spacing:0.45px;color:#333">10,00</span>
<span style="left:941px;width:73px;text-align:right;top:281.30px;font-size:11.5px;line-height:12px;letter-spacing:0.45px;color:#333">0,00</span>
<span style="left:1021px;width:73px;text-align:right;top:281.30px;font-size:11.5px;line-height:12px;letter-spacing:0.45px;color:#333">10.165,00</span>
<span style="left:1px;width:38px;text-align:right;top:302.63px;font-size:11.5px;line-height:12px;letter-spacing:0.45px;color:#333">15</span>
<span style="left:53px;width:56px;overflow:hidden;top:302.63px;font-size:11.5px;line-height:12px;color:#333;letter-spacing:0.6px">01/03/24</span>
<span style="left:118px;width:221px;overflow:hidden;top:302.63px;font-size:11.5px;line-height:12px;color:#333;letter-spacing:0.25px">Ins OP 5/10 Guarda Roupa Veneza 4 p...</span>
<span style="left:348px;width:51px;overflow:hidden;top:302.63px;font-size:11.5px;line-height:12px;color:#333;letter-spacing:0.25px">Linha 1</span>
<span style="left:408px;width:131px;overflow:hidden;top:302.63px;font-size:11.5px;line-height:12px;color:#333;letter-spacing:0.25px">PV 11 #1 Supermerc...</span>
<span style="left:621px;width:73px;text-align:right;top:302.63px;font-size:11.5px;line-height:12px;letter-spacing:0.45px;color:#333">15,00</span>
<span style="left:701px;width:73px;text-align:right;top:302.63px;font-size:11.5px;line-height:12px;letter-spacing:0.45px;color:#333">0,00</span>
<span style="left:781px;width:73px;text-align:right;top:302.63px;font-size:11.5px;line-height:12px;letter-spacing:0.45px;color:#333">0,00</span>
<span style="left:861px;width:73px;text-align:right;top:302.63px;font-size:11.5px;line-height:12px;letter-spacing:0.45px;color:#333">0,00</span>
<span style="left:941px;width:73px;text-align:right;top:302.63px;font-size:11.5px;line-height:12px;letter-spacing:0.45px;color:#333">0,00</span>
<span style="left:1021px;width:73px;text-align:right;top:302.63px;font-size:11.5px;line-height:12px;letter-spacing:0.45px;color:#333">10.150,00</span>
<div style="left:0;top:319px;width:1260px;height:22px;background:#f0f1f2"></div>
<span style="left:1px;width:38px;text-align:right;top:323.96px;font-size:11.5px;line-height:12px;letter-spacing:0.45px;color:#333">16</span>
<span style="left:53px;width:56px;overflow:hidden;top:323.96px;font-size:11.5px;line-height:12px;color:#333;letter-spacing:0.6px">01/03/24</span>
<span style="left:118px;width:221px;overflow:hidden;top:323.96px;font-size:11.5px;line-height:12px;color:#333;letter-spacing:0.25px">Ins OP 15/10 Guarda Roupa Veneza 4 ...</span>
<span style="left:348px;width:51px;overflow:hidden;top:323.96px;font-size:11.5px;line-height:12px;color:#333;letter-spacing:0.25px">Linha 1</span>
<span style="left:408px;width:131px;overflow:hidden;top:323.96px;font-size:11.5px;line-height:12px;color:#333;letter-spacing:0.25px">PV 22 #1 Supermerc...</span>
<span style="left:621px;width:73px;text-align:right;top:323.96px;font-size:11.5px;line-height:12px;letter-spacing:0.45px;color:#333">15,00</span>
<span style="left:701px;width:73px;text-align:right;top:323.96px;font-size:11.5px;line-height:12px;letter-spacing:0.45px;color:#333">0,00</span>
<span style="left:781px;width:73px;text-align:right;top:323.96px;font-size:11.5px;line-height:12px;letter-spacing:0.45px;color:#333">0,00</span>
<span style="left:861px;width:73px;text-align:right;top:323.96px;font-size:11.5px;line-height:12px;letter-spacing:0.45px;color:#333">0,00</span>
<span style="left:941px;width:73px;text-align:right;top:323.96px;font-size:11.5px;line-height:12px;letter-spacing:0.45px;color:#333">0,00</span>
<span style="left:1021px;width:73px;text-align:right;top:323.96px;font-size:11.5px;line-height:12px;letter-spacing:0.45px;color:#333">10.135,00</span>
<span style="left:1px;width:38px;text-align:right;top:345.30px;font-size:11.5px;line-height:12px;letter-spacing:0.45px;color:#333">17</span>
<span style="left:53px;width:56px;overflow:hidden;top:345.30px;font-size:11.5px;line-height:12px;color:#333;letter-spacing:0.6px">01/03/24</span>
<span style="left:118px;width:221px;overflow:hidden;top:345.30px;font-size:11.5px;line-height:12px;color:#333;letter-spacing:0.25px">Ins OP 22/10 Guarda Roupa Veneza 4 ...</span>
<span style="left:348px;width:51px;overflow:hidden;top:345.30px;font-size:11.5px;line-height:12px;color:#333;letter-spacing:0.25px">Linha 1</span>
<span style="left:408px;width:131px;overflow:hidden;top:345.30px;font-size:11.5px;line-height:12px;color:#333;letter-spacing:0.25px">PV 8 #1 Supermerca...</span>
<span style="left:621px;width:73px;text-align:right;top:345.30px;font-size:11.5px;line-height:12px;letter-spacing:0.45px;color:#333">15,00</span>
<span style="left:701px;width:73px;text-align:right;top:345.30px;font-size:11.5px;line-height:12px;letter-spacing:0.45px;color:#333">0,00</span>
<span style="left:781px;width:73px;text-align:right;top:345.30px;font-size:11.5px;line-height:12px;letter-spacing:0.45px;color:#333">0,00</span>
<span style="left:861px;width:73px;text-align:right;top:345.30px;font-size:11.5px;line-height:12px;letter-spacing:0.45px;color:#333">0,00</span>
<span style="left:941px;width:73px;text-align:right;top:345.30px;font-size:11.5px;line-height:12px;letter-spacing:0.45px;color:#333">0,00</span>
<span style="left:1021px;width:73px;text-align:right;top:345.30px;font-size:11.5px;line-height:12px;letter-spacing:0.45px;color:#333">10.120,00</span>
<div style="left:0;top:362px;width:1260px;height:21px;background:#f0f1f2"></div>
<span style="left:1px;width:38px;text-align:right;top:366.63px;font-size:11.5px;line-height:12px;letter-spacing:0.45px;color:#333">18</span>
<span style="left:53px;width:56px;overflow:hidden;top:366.63px;font-size:11.5px;line-height:12px;color:#333;letter-spacing:0.6px">01/12/33</span>
<span style="left:118px;width:221px;overflow:hidden;top:366.63px;font-size:11.5px;line-height:12px;color:#333;letter-spacing:0.25px">Vencimento</span>
<span style="left:348px;width:51px;overflow:hidden;top:366.63px;font-size:11.5px;line-height:12px;color:#333;letter-spacing:0.25px">Linha</span>
<span style="left:621px;width:73px;text-align:right;top:366.63px;font-size:11.5px;line-height:12px;letter-spacing:0.45px;color:#333">4.943,00</span>
<span style="left:701px;width:73px;text-align:right;top:366.63px;font-size:11.5px;line-height:12px;letter-spacing:0.45px;color:#333">0,00</span>
<span style="left:781px;width:73px;text-align:right;top:366.63px;font-size:11.5px;line-height:12px;letter-spacing:0.45px;color:#333">0,00</span>
<span style="left:861px;width:73px;text-align:right;top:366.63px;font-size:11.5px;line-height:12px;letter-spacing:0.45px;color:#333">0,00</span>
<span style="left:941px;width:73px;text-align:right;top:366.63px;font-size:11.5px;line-height:12px;letter-spacing:0.45px;color:#333">0,00</span>
<span style="left:1021px;width:73px;text-align:right;top:366.63px;font-size:11.5px;line-height:12px;letter-spacing:0.45px;color:#333">5.177,00</span>
<span style="left:1px;width:38px;text-align:right;top:387.96px;font-size:11.5px;line-height:12px;letter-spacing:0.45px;color:#333">19</span>
<span style="left:53px;width:56px;overflow:hidden;top:387.96px;font-size:11.5px;line-height:12px;color:#333;letter-spacing:0.6px">01/12/33</span>
<span style="left:118px;width:221px;overflow:hidden;top:387.96px;font-size:11.5px;line-height:12px;color:#333;letter-spacing:0.25px">Vencimento</span>
<span style="left:348px;width:51px;overflow:hidden;top:387.96px;font-size:11.5px;line-height:12px;color:#333;letter-spacing:0.25px">Linha</span>
<span style="left:621px;width:73px;text-align:right;top:387.96px;font-size:11.5px;line-height:12px;letter-spacing:0.45px;color:#333">5.000,00</span>
<span style="left:701px;width:73px;text-align:right;top:387.96px;font-size:11.5px;line-height:12px;letter-spacing:0.45px;color:#333">0,00</span>
<span style="left:781px;width:73px;text-align:right;top:387.96px;font-size:11.5px;line-height:12px;letter-spacing:0.45px;color:#333">0,00</span>
<span style="left:861px;width:73px;text-align:right;top:387.96px;font-size:11.5px;line-height:12px;letter-spacing:0.45px;color:#333">0,00</span>
<span style="left:941px;width:73px;text-align:right;top:387.96px;font-size:11.5px;line-height:12px;letter-spacing:0.45px;color:#333">0,00</span>
<span style="left:1021px;width:73px;text-align:right;top:387.96px;font-size:11.5px;line-height:12px;letter-spacing:0.45px;color:#333">177,00</span>
<div style="left:45px;top:0;width:1px;height:397px;background:#d3d6da"></div>
<div style="left:110px;top:0;width:1px;height:397px;background:#d3d6da"></div>
<div style="left:340px;top:0;width:1px;height:397px;background:#d3d6da"></div>
<div style="left:400px;top:0;width:1px;height:397px;background:#d3d6da"></div>
<div style="left:540px;top:0;width:1px;height:397px;background:#d3d6da"></div>
<div style="left:620px;top:0;width:1px;height:397px;background:#d3d6da"></div>
<div style="left:700px;top:0;width:1px;height:397px;background:#d3d6da"></div>
<div style="left:780px;top:0;width:1px;height:397px;background:#d3d6da"></div>
<div style="left:860px;top:0;width:1px;height:397px;background:#d3d6da"></div>
<div style="left:940px;top:0;width:1px;height:397px;background:#d3d6da"></div>
<div style="left:1020px;top:0;width:1px;height:397px;background:#d3d6da"></div>
<div style="left:1100px;top:0;width:1px;height:397px;background:#d3d6da"></div>
<div style="left:1180px;top:0;width:1px;height:397px;background:#d3d6da"></div>
</div>
<div style="left:1336px;top:234px;width:17px;height:397px;background:#f0f0f0"></div>
<div style="left:1341px;top:240.5px;width:0;height:0;border-left:3.5px solid transparent;border-right:3.5px solid transparent;border-bottom:4.5px solid #a3a3a3"></div>
<div style="left:1338px;top:251px;width:13px;height:356px;background:#c1c1c1"></div>
<div style="left:1340.5px;top:619.6px;width:0;height:0;border-left:4.0px solid transparent;border-right:4.0px solid transparent;border-top:4.8px solid #505050"></div>
<div style="left:1020px;top:203px;width:94px;height:434px;box-sizing:border-box;border:3px solid #ff0000;border-radius:2px"></div>
</body></html>
